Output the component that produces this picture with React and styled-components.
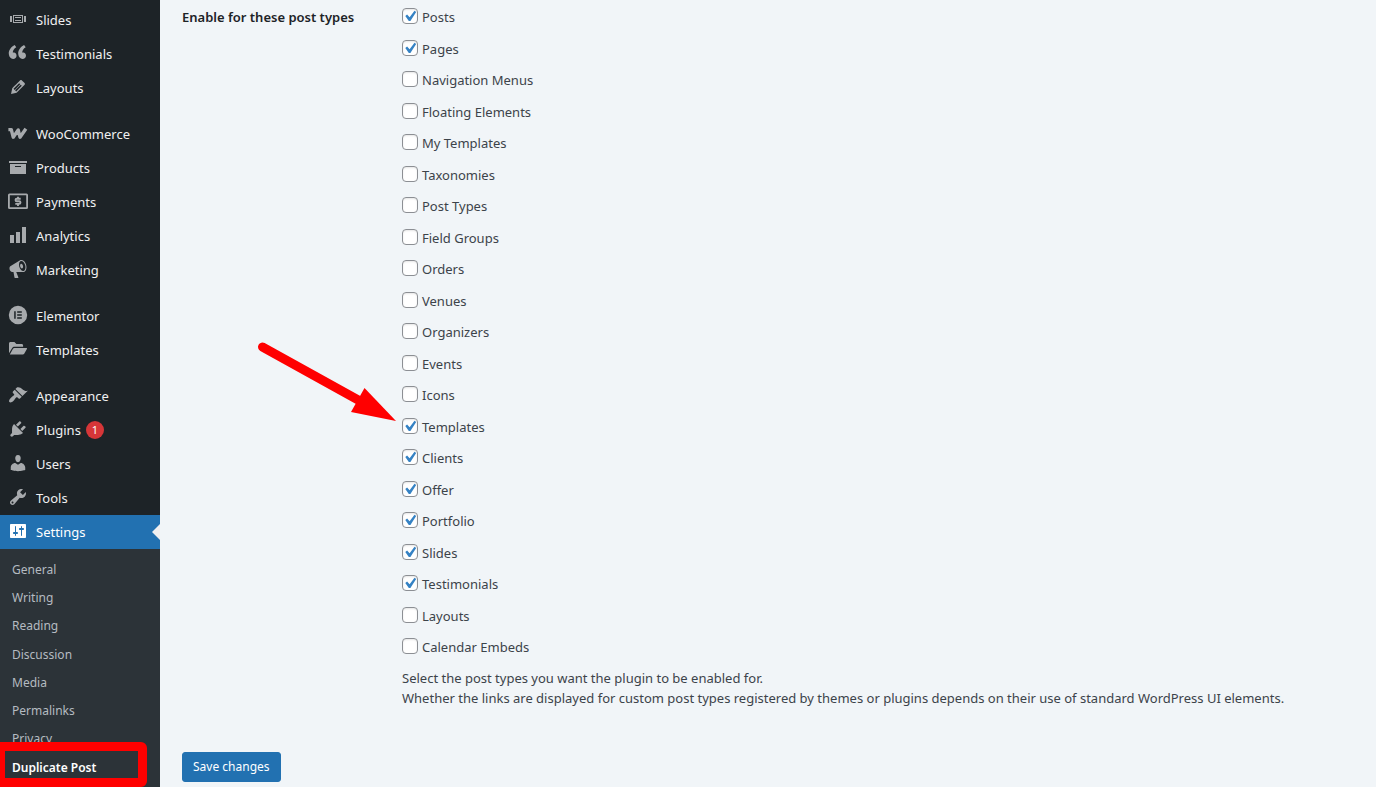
import React from "react";
import styled, { createGlobalStyle, css } from "styled-components";

const GlobalStyle = createGlobalStyle`
  *, *::before, *::after { box-sizing: border-box; }
  body {
    margin: 0;
    background: #f1f5f8;
    color: #3c434a;
    font-family: "Noto Sans", "Open Sans", sans-serif;
    font-size: 13px;
    line-height: 20px;
  }
`;

const Page = styled.div`
  display: flex;
  height: 100vh;
  overflow: hidden;
`;

/* ---------- sidebar ---------- */

const Sidebar = styled.nav`
  flex: 0 0 160px;
  background: #1d2327;
`;

const MenuGroup = styled.ul`
  list-style: none;
  margin: 0;
  padding: 3px 0 0;

  & + & {
    padding-top: 12px;
  }
`;

const MenuLink = styled.a`
  position: relative;
  display: flex;
  align-items: center;
  gap: 8px;
  height: 34px;
  padding-left: 8px;
  color: #f0f0f1;
  text-decoration: none;

  ${(p) =>
    p.$current &&
    css`
      background: #2271b1;
      color: #fff;

      &::after {
        content: "";
        position: absolute;
        right: 0;
        border: 8px solid transparent;
        border-left-width: 0;
        border-right-color: #f0f0f1;
      }
    `}
`;

const MenuIcon = styled.svg`
  flex: none;
  width: 20px;
  height: 20px;
  margin-bottom: 2px;
  fill: ${(p) => (p.$current ? "#fff" : "#a7aaad")};
`;

const Badge = styled.span`
  min-width: 18px;
  height: 18px;
  margin-left: -3px;
  border-radius: 9px;
  background: #d63638;
  color: #fff;
  font-size: 11px;
  line-height: 18px;
  text-align: center;
`;

const Submenu = styled.ul`
  list-style: none;
  margin: 0;
  padding: 7px 0 8px;
  background: #2c3338;
`;

const SubmenuItem = styled.li`
  position: relative;
  height: 28px;

  &:nth-child(4n) {
    height: 29px;
  }
`;

const SubmenuLink = styled.a`
  display: flex;
  align-items: center;
  height: 100%;
  padding-left: 12px;
  font-size: 12px;
  color: ${(p) => (p.$current ? "#fff" : "#b5bbc1")};
  font-weight: ${(p) => (p.$current ? 600 : 400)};
  text-decoration: none;
`;

const Highlight = styled.span`
  position: absolute;
  left: 0;
  top: -11px;
  width: 147px;
  height: 45px;
  border: 9px solid #f00;
  border-left-width: 5px;
  border-radius: 0 6px 6px 0;
  pointer-events: none;
`;

/* ---------- settings form ---------- */

const Main = styled.main`
  flex: 1;
  min-width: 0;
  padding: 8px 20px 0 22px;
`;

const FormRow = styled.div`
  display: grid;
  grid-template-columns: 220px 1fr;
`;

const RowHeading = styled.h2`
  margin: 0;
  color: #1d2327;
  font-size: 13px;
  font-weight: 600;
  line-height: 18px;
`;

const Options = styled.fieldset`
  min-width: 0;
  margin: 0;
  padding: 0;
  border: 0;
`;

const Option = styled.div`
  position: relative;
  display: flex;
  align-items: flex-start;
  gap: 4px;
  height: 16px;
  margin-bottom: 16px;

  &:nth-of-type(even) {
    margin-bottom: 15px;
  }

  &:last-of-type {
    margin-bottom: 14px;
  }
`;

const Checkbox = styled.input.attrs({ type: "checkbox" })`
  appearance: none;
  display: grid;
  place-content: center;
  flex: none;
  width: 16px;
  height: 16px;
  margin: 0;
  border: 1px solid #8c8f94;
  border-radius: 4px;
  background: #fff;
  box-shadow: inset 0 1px 2px rgba(0, 0, 0, 0.1);

  &:checked::before {
    content: "";
    width: 20px;
    height: 20px;
    background: #3582c4;
    clip-path: path("M14.5 4.800l1.700 1.200-5.800 9.100H8.800L5.300 10.100l1.800-1.600 2.500 2.700z");
  }
`;

const OptionLabel = styled.label`
  line-height: 18px;
`;

const Pointer = styled.svg`
  position: absolute;
  left: -146px;
  top: -78px;
  width: 142px;
  height: 84px;
  pointer-events: none;
`;

const Description = styled.p`
  margin: 0;
`;

const SaveButton = styled.button`
  height: 30px;
  margin-top: 44px;
  padding: 0 10px;
  border: 1px solid #2271b1;
  border-radius: 3px;
  background: #2271b1;
  color: #fff;
  font: inherit;
  font-size: 12px;
  line-height: 28px;
`;

/* ---------- icons ---------- */

const icons = {
  slides: (
    <path d="M5 14V6h10v8H5zm-3-1V7h2v6H2zm4-6v6h8V7H6zm10 0h2v6h-2V7zm-3 2V8H7v1h6zm0 3v-1H7v1h6z" />
  ),
  quote: (
    <path d="M8.54 12.74c0-.87-.24-1.61-.72-2.22-.73-.92-2.14-1.03-2.96-.85-.34-1.93 1.3-4.39 3.42-5.45L6.65 1.94C3.45 3.46.31 6.96.85 11.37 1.19 14.16 2.8 16 5.08 16c1 0 1.83-.29 2.48-.88.66-.59.98-1.38.98-2.38zm9.43 0c0-.87-.24-1.61-.72-2.22-.73-.92-2.14-1.03-2.96-.85-.34-1.93 1.3-4.39 3.42-5.45l-1.63-2.28c-3.2 1.52-6.34 5.02-5.8 9.43.34 2.79 1.95 4.63 4.23 4.63 1 0 1.83-.29 2.48-.88.66-.59.98-1.38.98-2.38z" />
  ),
  edit: (
    <path d="M13.89 3.39l2.71 2.72c.46.46.42 1.24.03 1.64l-8.01 8.02-5.56 1.16 1.16-5.58s7.6-7.63 7.99-8.03c.39-.39 1.22-.39 1.68.07zm-2.73 2.79l-5.59 5.61 1.11 1.11 5.54-5.65zm-2.97 8.23l5.58-5.6-1.07-1.08-5.59 5.6z" />
  ),
  woo: (
    <path
      d="M.4 6.600H3.300L5.200 14.200L10.200 7L12 14.200L17.900 5.800"
      fill="none"
      stroke="#a7aaad"
      strokeWidth="3.400"
      strokeLinejoin="round"
    />
  ),
  archive: <path d="M19 4v2H1V4h18zM2 7h16v10H2V7zm11 3V9H7v1h6z" />,
  payments: (
    <>
      <path
        fillRule="evenodd"
        d="M1.500 2.500h17A1.500 1.500 0 0 1 20 4v12.500A1.500 1.500 0 0 1 18.500 18h-17A1.500 1.500 0 0 1 0 16.500V4A1.500 1.500 0 0 1 1.500 2.500zM1.800 4.200v12.100h16.400V4.200z"
      />
      <path
        d="M12.700 7.700H8.800c-1.700 0-1.700 2.600 0 2.600h2.400c1.700 0 1.700 2.600 0 2.600H7.300M10 5.800v2M10 13v2"
        fill="none"
        stroke="#a7aaad"
        strokeWidth="1.900"
      />
    </>
  ),
  chart: <path d="M18 18V2h-4v16h4zm-6 0V7H8v11h4zm-6 0v-8H2v8h4z" />,
  megaphone: (
    <path d="M18.15 5.94c.46 1.62.38 3.22-.02 4.48-.42 1.28-1.26 2.18-2.3 2.48-.16.06-.26.06-.4.06-.06.02-.12.02-.18.02-.06.02-.14.02-.22.02h-6.8l2.22 5.5c.02.14-.06.26-.14.34-.08.1-.24.16-.34.16H6.95c-.1 0-.26-.06-.34-.16-.08-.08-.16-.2-.14-.34l-1-5.5H4.25l-.02-.02c-.5.06-1.08-.18-1.54-.62s-.88-1.08-1.06-1.88c-.24-.8-.2-1.56-.02-2.2.18-.62.58-1.08 1.06-1.3l.02-.02 9-5.4c.1-.06.18-.1.24-.16.06-.04.14-.08.24-.12.16-.08.28-.12.5-.18 1.04-.3 2.24.1 3.22.98s1.84 2.24 2.26 3.86zm-2.58 5.98h-.02c.4-.1.74-.34 1.04-.7.58-.7.86-1.76.86-3.04 0-.64-.1-1.3-.28-1.98-.34-1.36-1.02-2.5-1.78-3.24s-1.68-1.1-2.46-.88c-.82.22-1.4.96-1.7 2-.32 1.04-.28 2.36.06 3.72.38 1.36 1 2.5 1.8 3.24.78.74 1.62 1.1 2.48.88zm-2.54-7.08c.22-.04.42-.02.62.04.38.16.76.48 1.02 1s.42 1.2.42 1.78c0 .3-.04.56-.12.8-.18.48-.44.84-.86.94-.34.1-.8-.06-1.14-.4s-.64-.86-.78-1.5c-.18-.62-.12-1.24.02-1.72s.48-.84.82-.94z" />
  ),
  elementor: (
    <path
      fillRule="evenodd"
      d="M10 .8a9.200 9.200 0 1 1 0 18.400A9.200 9.200 0 0 1 10 .8zM6.200 6.200v7.600h1.500V6.200zM9.200 6.200v1.500h4.600V6.200zM9.200 9.250v1.500h4.600v-1.500zM9.200 12.300v1.500h4.600v-1.500z"
    />
  ),
  folder: (
    <>
      <path d="M1 14.200V4.600C1 3.700 1.600 3 2.500 3h3.900l2 2h5.200c.9 0 1.500.6 1.500 1.500v1.300H6.500c-1 0-1.800.4-2.300 1.300z" />
      <path d="M1.800 15.500L5 9.800c.3-.6.8-.8 1.400-.8h11.900c.6 0 .9.600.6 1.100l-2.700 4.600c-.3.5-.8.8-1.400.8z" />
    </>
  ),
  appearance: (
    <path d="M14.48 11.06L7.41 3.99l1.5-1.5c.5-.56 2.3-.47 3.51.32 1.21.8 1.43 1.28 2.91 2.1 1.18.64 2.45 1.26 4.45.85zm-.71.71L6.7 4.7 4.93 6.47c-.39.39-.39 1.02 0 1.41l1.06 1.06c.39.39.39 1.03 0 1.42-.6.6-1.43 1.11-2.21 1.69-.35.26-.7.53-1.01.84C1.43 14.23.4 16.08 1.4 17.07c.99 1 2.84-.03 4.18-1.36.31-.31.58-.66.85-1.02.57-.78 1.08-1.61 1.69-2.21.39-.39 1.02-.39 1.41 0l1.06 1.06c.39.39 1.02.39 1.41 0z" />
  ),
  plugins: (
    <path d="M13.11 4.36L9.87 7.6 8 5.73l3.24-3.24c.35-.34 1.05-.2 1.56.32.52.51.66 1.21.31 1.55zm-8 1.77l.91-1.12 9.01 9.01-1.19.84c-.71.71-2.63 1.16-3.82 1.16H6.14L4.9 17.26c-.59.59-1.54.59-2.12 0-.59-.58-.59-1.53 0-2.12l1.24-1.24v-3.88c0-1.13.4-3.19 1.09-3.89zm7.26 3.97l3.24-3.24c.34-.35 1.04-.21 1.55.31.52.51.66 1.21.31 1.55l-3.24 3.25z" />
  ),
  users: (
    <path d="M10 9.25c-2.27 0-2.73-3.44-2.73-3.44C7 4.02 7.82 2 9.97 2c2.16 0 2.98 2.02 2.71 3.81 0 0-.41 3.44-2.68 3.44zm0 2.57L12.72 10c2.39 0 4.52 2.33 4.52 4.53v2.49s-3.65 1.13-7.24 1.13c-3.65 0-7.24-1.13-7.24-1.13v-2.49c0-2.25 1.94-4.48 4.47-4.48z" />
  ),
  tools: (
    <path d="M16.68 9.77c-1.34 1.34-3.3 1.67-4.95.99l-5.41 6.52c-.99.99-2.59.99-3.58 0s-.99-2.59 0-3.57l6.52-5.42c-.68-1.65-.35-3.61.99-4.95 1.28-1.28 3.12-1.62 4.72-1.06l-2.89 2.89 2.82 2.82 2.86-2.87c.53 1.58.18 3.39-1.08 4.65zM3.81 16.21c.4.39 1.04.39 1.43 0 .4-.4.4-1.04 0-1.43-.39-.4-1.03-.4-1.43 0-.39.39-.39 1.03 0 1.43z" />
  ),
  settings: (
    <path d="M18 16V4c0-.55-.45-1-1-1H3c-.55 0-1 .45-1 1v12c0 .55.45 1 1 1h14c.55 0 1-.45 1-1zM8 11h1c.55 0 1 .45 1 1s-.45 1-1 1H8v1.5c0 .28-.22.5-.5.5s-.5-.22-.5-.5V13H6c-.55 0-1-.45-1-1s.45-1 1-1h1V5.5c0-.28.22-.5.5-.5s.5.22.5.5V11zm5-2h-1c-.55 0-1-.45-1-1s.45-1 1-1h1V5.5c0-.28.22-.5.5-.5s.5.22.5.5V7h1c.55 0 1 .45 1 1s-.45 1-1 1h-1v5.5c0 .28-.22.5-.5.5s-.5-.22-.5-.5V9z" />
  ),
};

/* ---------- data ---------- */

const menuGroups = [
  [
    { label: "Slides", icon: "slides" },
    { label: "Testimonials", icon: "quote" },
    { label: "Layouts", icon: "edit" },
  ],
  [
    { label: "WooCommerce", icon: "woo" },
    { label: "Products", icon: "archive" },
    { label: "Payments", icon: "payments" },
    { label: "Analytics", icon: "chart" },
    { label: "Marketing", icon: "megaphone" },
  ],
  [
    { label: "Elementor", icon: "elementor" },
    { label: "Templates", icon: "folder" },
  ],
  [
    { label: "Appearance", icon: "appearance" },
    { label: "Plugins", icon: "plugins", count: 1 },
    { label: "Users", icon: "users" },
    { label: "Tools", icon: "tools" },
    { label: "Settings", icon: "settings", current: true },
  ],
];

const settingsPages = [
  "General",
  "Writing",
  "Reading",
  "Discussion",
  "Media",
  "Permalinks",
  "Privacy",
  "Duplicate Post",
];

const postTypes = [
  ["Posts", true],
  ["Pages", true],
  ["Navigation Menus", false],
  ["Floating Elements", false],
  ["My Templates", false],
  ["Taxonomies", false],
  ["Post Types", false],
  ["Field Groups", false],
  ["Orders", false],
  ["Venues", false],
  ["Organizers", false],
  ["Events", false],
  ["Icons", false],
  ["Templates", true],
  ["Clients", true],
  ["Offer", true],
  ["Portfolio", true],
  ["Slides", true],
  ["Testimonials", true],
  ["Layouts", false],
  ["Calendar Embeds", false],
];

function MenuItem({ label, icon, count, current }) {
  return (
    <li>
      <MenuLink href="#" $current={current} aria-current={current ? "true" : undefined}>
        <MenuIcon viewBox="0 0 20 20" $current={current} aria-hidden="true">
          {icons[icon]}
        </MenuIcon>
        {label}
        {count && <Badge>{count}</Badge>}
      </MenuLink>
    </li>
  );
}

function PointerArrow() {
  return (
    <Pointer viewBox="0 0 142 84" aria-hidden="true">
      <path d="M6.500 7L104 61" stroke="#f00" strokeWidth="9" strokeLinecap="round" />
      <path d="M108.500 48L95 72L140 81z" fill="#f00" />
    </Pointer>
  );
}

export default function App() {
  return (
    <>
      <GlobalStyle />
      <Page>
        <Sidebar aria-label="Main menu">
          {menuGroups.map((group) => (
            <MenuGroup key={group[0].label}>
              {group.map((item) => (
                <MenuItem key={item.label} {...item} />
              ))}
            </MenuGroup>
          ))}
          <Submenu>
            {settingsPages.map((page) => {
              const current = page === "Duplicate Post";
              return (
                <SubmenuItem key={page}>
                  <SubmenuLink href="#" $current={current}>
                    {page}
                  </SubmenuLink>
                  {current && <Highlight />}
                </SubmenuItem>
              );
            })}
          </Submenu>
        </Sidebar>
        <Main>
          <form onSubmit={(e) => e.preventDefault()}>
            <FormRow>
              <RowHeading id="post-types-heading">Enable for these post types</RowHeading>
              <Options aria-labelledby="post-types-heading">
                {postTypes.map(([name, checked]) => {
                  const id = `type-${name.toLowerCase().replace(/ /g, "-")}`;
                  return (
                    <Option key={name}>
                      <Checkbox id={id} defaultChecked={checked} />
                      <OptionLabel htmlFor={id}>{name}</OptionLabel>
                      {name === "Templates" && <PointerArrow />}
                    </Option>
                  );
                })}
                <Description>
                  Select the post types you want the plugin to be enabled for.
                  <br />
                  Whether the links are displayed for custom post types registered by themes or
                  plugins depends on their use of standard WordPress UI elements.
                </Description>
              </Options>
            </FormRow>
            <SaveButton type="submit">Save changes</SaveButton>
          </form>
        </Main>
      </Page>
    </>
  );
}
